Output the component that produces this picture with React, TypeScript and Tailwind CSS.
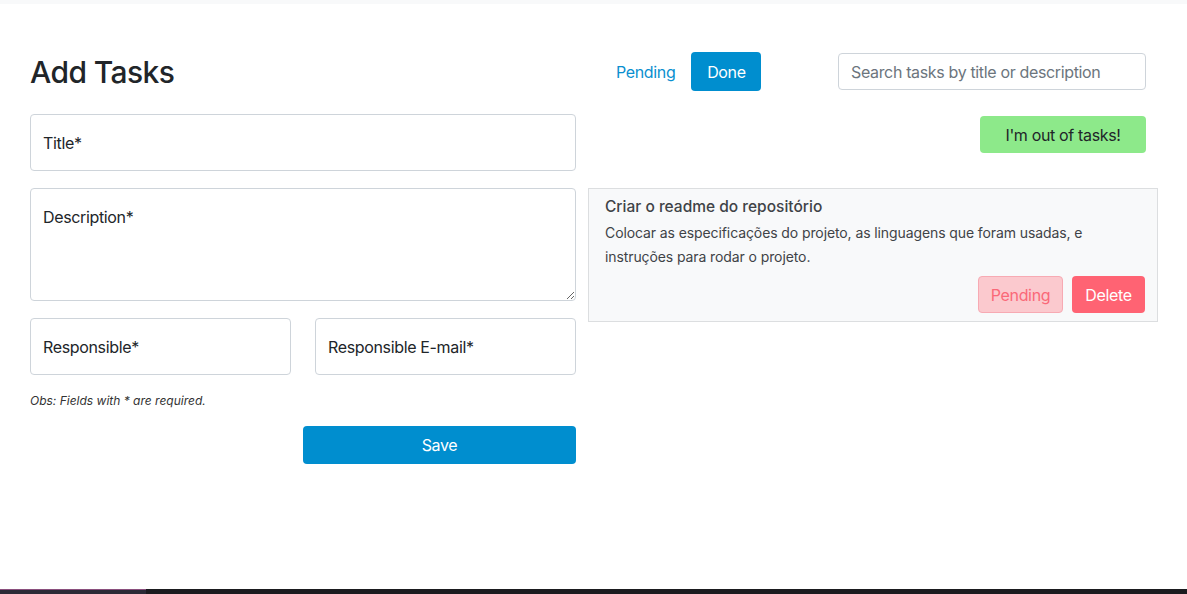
import { useState } from "react";

const TaskCard = ({ title, description }: { title: string; description: string }) => (
  <div className="border border-[#dcdee0] bg-[#f8f9fa] pl-4 pr-3 pt-[6px] pb-2">
    <div className="text-[15.5px] font-medium leading-6 tracking-normal text-[#3f4347]">{title}</div>
    <p className="mt-[2px] pr-8 text-[14px] leading-6 tracking-[-0.1px] text-[#3f4347]">{description}</p>
    <div className="mt-[7px] flex justify-end gap-[9px]">
      <button className="h-[37px] w-[85px] rounded border border-[#f7aab3] bg-[#fbc9ce] text-base text-[#fa6878]">
        Pending
      </button>
      <button className="h-[37px] w-[73px] rounded bg-[#ff6373] text-base text-white">Delete</button>
    </div>
  </div>
);

const App = () => {
  const [search, setSearch] = useState("");

  return (
    <div className="flex h-[594px] flex-col bg-white font-['Inter',sans-serif] tracking-[-0.35px] text-[#212529]">
      <div className="h-1 bg-[#f8f9fa]" />
      <div className="flex flex-1 gap-3 pl-[30px] pt-12">
        {/* form */}
        <div className="flex w-[546px] flex-col">
          <h2 className="h-[38px] text-[30px] font-medium leading-[40px] tracking-[-0.6px]">Add Tasks</h2>
          <input
            placeholder="Title*"
            className="mt-6 h-[57px] min-w-0 rounded border border-[#ced4da] px-3 text-base placeholder:text-[#212529] focus:outline-none"
          />
          <textarea
            placeholder="Description*"
            className="mt-[17px] h-[113px] resize-y rounded border border-[#ced4da] px-3 pt-4 text-base placeholder:text-[#212529] focus:outline-none"
          />
          <div className="mt-[17px] flex gap-6">
            <input
              placeholder="Responsible*"
              className="h-[57px] w-[261px] min-w-0 rounded border border-[#ced4da] px-3 text-base placeholder:text-[#212529] focus:outline-none"
            />
            <input
              placeholder="Responsible E-mail*"
              className="h-[57px] w-[261px] min-w-0 rounded border border-[#ced4da] px-3 text-base placeholder:text-[#212529] focus:outline-none"
            />
          </div>
          <p className="mt-[18px] text-xs italic tracking-normal text-[#333]">Obs: Fields with * are required.</p>
          <div className="mt-[17px] flex justify-end">
            <button className="h-[38px] w-[273px] rounded bg-[#008ecf] text-base text-white">Save</button>
          </div>
        </div>

        {/* list */}
        <div className="flex w-[570px] flex-col">
          <div className="flex h-[39px] items-center justify-between pl-[28px] pr-3">
            <div className="flex items-center gap-4">
              <button className="text-base text-[#0a8fcf]">Pending</button>
              <button className="h-[39px] w-[70px] rounded bg-[#008ecf] text-base text-white">Done</button>
            </div>
            <input
              value={search}
              onChange={(e) => setSearch(e.target.value)}
              placeholder="Search tasks by title or description"
              className="h-[37px] w-[308px] rounded border border-[#ced4da] px-3 text-base placeholder:text-[#6c757d] focus:outline-none"
            />
          </div>
          <div className="mt-[25px] flex justify-end pr-3">
            <button className="h-[37px] w-[166px] rounded bg-[#8de98a] text-base text-[#212529]">I'm out of tasks!</button>
          </div>
          <div className="mt-[35px]">
            <TaskCard
              title="Criar o readme do repositório"
              description="Colocar as especificações do projeto, as linguagens que foram usadas, e instruções para rodar o projeto."
            />
          </div>
        </div>
      </div>
      <div className="flex h-[5px]">
        <div className="w-[146px] border-t border-[#8a4f7d] bg-[#2b2a36]" />
        <div className="flex-1 bg-[#1b1b1f]" />
      </div>
    </div>
  );
};

export default App;
